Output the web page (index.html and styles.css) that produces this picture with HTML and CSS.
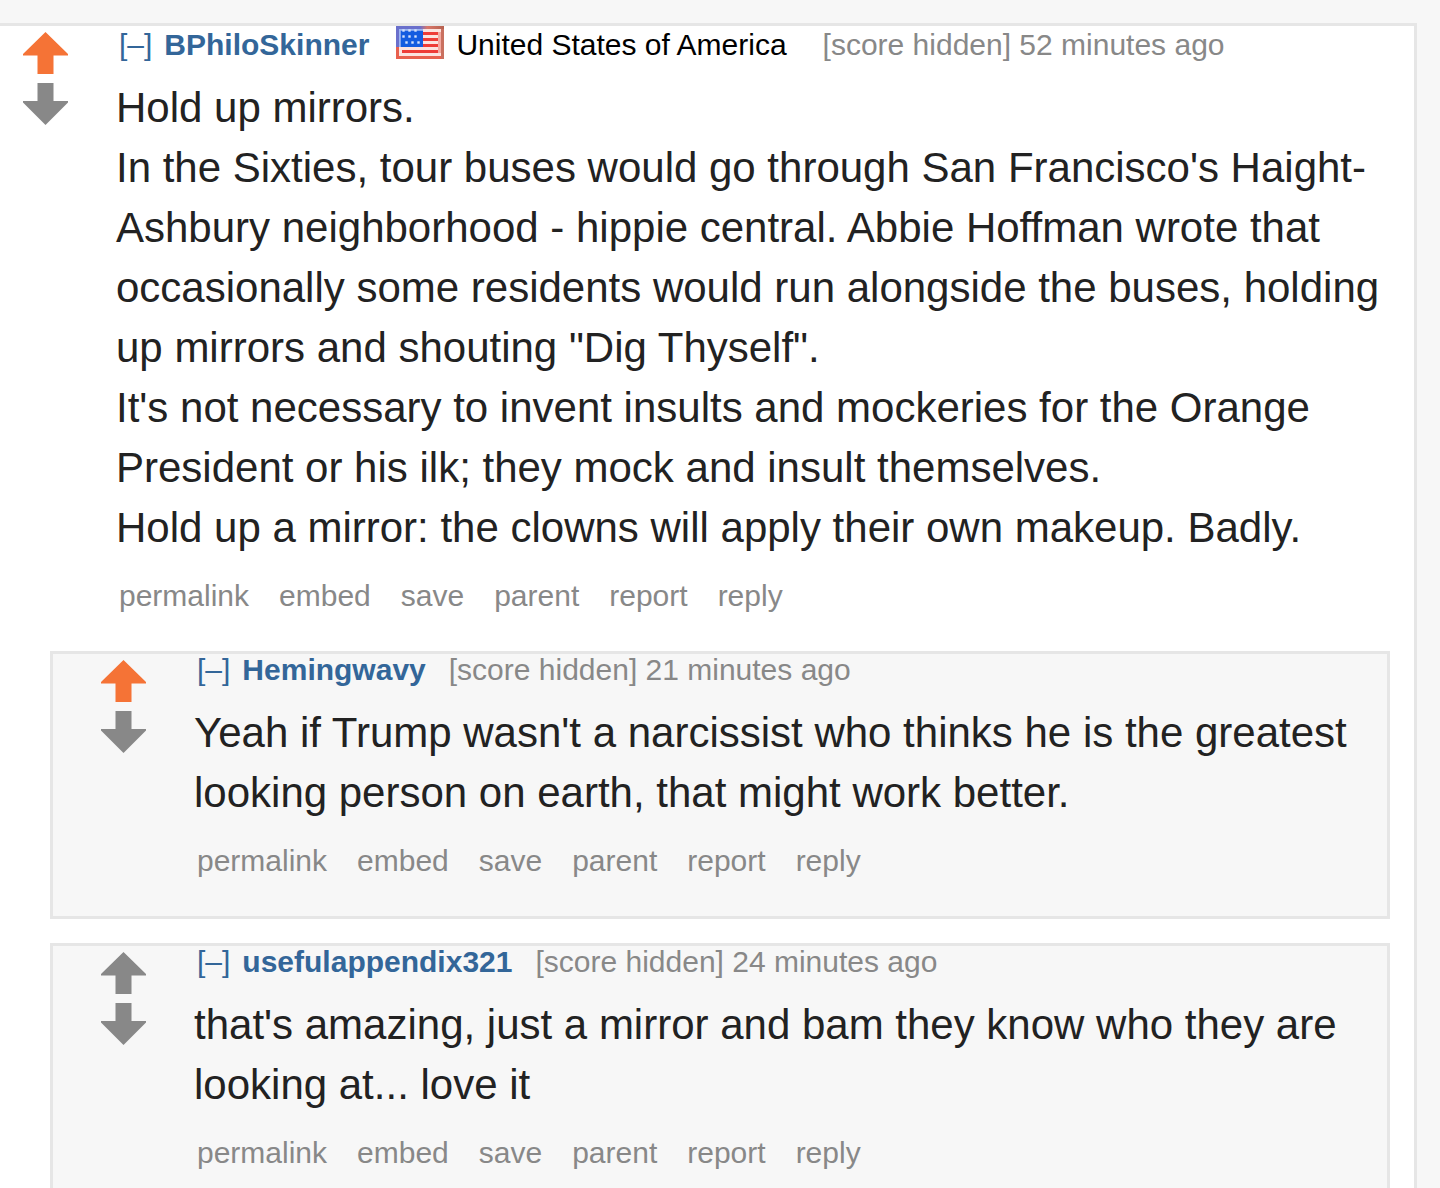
FILE: index.html
```
<!DOCTYPE html>
<html lang="en">
<head>
  <meta charset="UTF-8" />
  <meta name="viewport" content="width=device-width, initial-scale=1.0" />
  <title>Comments</title>
  <link rel="stylesheet" href="styles.css">
</head>
<body>
  <!-- shared arrow shapes -->
  <svg class="sprites" aria-hidden="true">
    <symbol id="arrow-up" viewBox="0 0 45 42">
      <path d="M22.5 0 L45 22 V23.5 H30.5 V42 H14.5 V23.5 H0 V22 Z" />
    </symbol>
    <symbol id="arrow-down" viewBox="0 0 45 42">
      <path d="M14.5 0 H30.5 V18 H45 V19.5 L22.5 42 L0 19.5 V18 H14.5 Z" />
    </symbol>
  </svg>

  <main class="thread">
    <article class="comment">
      <div class="votes">
        <button class="arrow voted" aria-label="upvote"><svg><use href="#arrow-up" /></svg></button>
        <button class="arrow" aria-label="downvote"><svg><use href="#arrow-down" /></svg></button>
      </div>
      <div class="entry">
        <div class="tagline has-flair">
          <a class="expand" href="#">[–]</a>
          <a class="author" href="#">BPhiloSkinner</a>
          <svg class="flag" viewBox="0 0 16 11" aria-hidden="true">
            <defs>
              <linearGradient id="edge">
                <stop offset="0.5" stop-color="#6a70cc" />
                <stop offset="0.65" stop-color="#d9776b" />
                <stop offset="1" stop-color="#b5614f" />
              </linearGradient>
            </defs>
            <rect width="16" height="11" fill="#e8604e" />
            <rect width="16" height="1" fill="url(#edge)" />
            <rect width="1" height="7" fill="#6a70cc" />
            <rect x="15" y="1" width="1" height="10" fill="#c9705f" />
            <rect x="1" y="1" width="14" height="9" fill="#fbe3df" />
            <!-- stripes -->
            <g fill="#ee3c37">
              <rect x="9" y="2" width="5" height="1" />
              <rect x="9" y="4" width="5" height="1" />
              <rect x="9" y="6" width="5" height="1" />
              <rect x="2" y="8" width="12" height="1" />
            </g>
            <rect x="14" y="2" width="1" height="7" fill="#f3aaa2" />
            <rect x="1" y="1" width="8" height="6" fill="#9db6f2" />
            <rect x="1.6" y="1.6" width="7.4" height="5.4" fill="#145ce0" />
            <g fill="#d5e2fb">
              <rect x="2.1" y="1.1" width="0.8" height="0.8" />
              <rect x="4.1" y="1.1" width="0.8" height="0.8" />
              <rect x="6.1" y="1.1" width="0.8" height="0.8" />
              <rect x="2.1" y="3.1" width="0.8" height="0.8" />
              <rect x="4.1" y="3.1" width="0.8" height="0.8" />
              <rect x="6.1" y="3.1" width="0.8" height="0.8" />
              <rect x="3.1" y="5.1" width="0.8" height="0.8" />
              <rect x="5.1" y="5.1" width="0.8" height="0.8" />
              <rect x="7.1" y="5.1" width="0.8" height="0.8" />
            </g>
          </svg>
          <span class="flair">United States of America</span>
          <span class="info">[score hidden] 52 minutes ago</span>
        </div>
        <div class="text">
          <p>Hold up mirrors.</p>
          <p>In the Sixties, tour buses would go through San Francisco's Haight-Ashbury neighborhood - hippie central. Abbie Hoffman wrote that occasionally some residents would run alongside the buses, holding up mirrors and shouting "Dig Thyself".</p>
          <p>It's not necessary to invent insults and mockeries for the Orange President or his ilk; they mock and insult themselves.</p>
          <p>Hold up a mirror: the clowns will apply their own makeup. Badly.</p>
        </div>
        <nav class="buttons">
          <a href="#">permalink</a>
          <a href="#">embed</a>
          <a href="#">save</a>
          <a href="#">parent</a>
          <a href="#">report</a>
          <a href="#">reply</a>
        </nav>
      </div>
    </article>

    <div class="children">
      <article class="comment child">
        <div class="votes">
          <button class="arrow voted" aria-label="upvote"><svg><use href="#arrow-up" /></svg></button>
          <button class="arrow" aria-label="downvote"><svg><use href="#arrow-down" /></svg></button>
        </div>
        <div class="entry">
          <div class="tagline">
            <a class="expand" href="#">[–]</a>
            <a class="author" href="#">Hemingwavy</a>
            <span class="info">[score hidden] 21 minutes ago</span>
          </div>
          <div class="text">
            <p>Yeah if Trump wasn't a narcissist who thinks he is the greatest looking person on earth, that might work better.</p>
          </div>
          <nav class="buttons">
            <a href="#">permalink</a>
            <a href="#">embed</a>
            <a href="#">save</a>
            <a href="#">parent</a>
            <a href="#">report</a>
            <a href="#">reply</a>
          </nav>
        </div>
      </article>

      <article class="comment child">
        <div class="votes">
          <button class="arrow" aria-label="upvote"><svg><use href="#arrow-up" /></svg></button>
          <button class="arrow" aria-label="downvote"><svg><use href="#arrow-down" /></svg></button>
        </div>
        <div class="entry">
          <div class="tagline">
            <a class="expand" href="#">[–]</a>
            <a class="author" href="#">usefulappendix321</a>
            <span class="info">[score hidden] 24 minutes ago</span>
          </div>
          <div class="text">
            <p>that's amazing, just a mirror and bam they know who they are looking at... love it</p>
          </div>
          <nav class="buttons">
            <a href="#">permalink</a>
            <a href="#">embed</a>
            <a href="#">save</a>
            <a href="#">parent</a>
            <a href="#">report</a>
            <a href="#">reply</a>
          </nav>
        </div>
      </article>
    </div>
  </main>
</body>
</html>
```
FILE: styles.css
```
:root {
  --bg: #f7f7f7;
  --border: #e6e6e6;
  --link: #369;
  --muted: #888;
  --orange: #f57336;
}

body {
  margin: 0;
  overflow: hidden;
  background: var(--bg);
  font-family: "Liberation Sans", Arial, sans-serif;
  font-size: 30px;
  line-height: 34px;
}

a {
  color: inherit;
  text-decoration: none;
}

p {
  margin: 0;
}

.sprites {
  display: none;
}

.thread {
  margin: 23px 23px 0 0;
  border: 3px solid var(--border);
  border-left: none;
  background: #fff;
}

.comment {
  display: flex;
  padding: 0 24px 38px 23px;
}

.votes {
  display: flex;
  flex-direction: column;
  flex: none;
  gap: 9px;
  width: 45px;
  margin-right: 48px;
  padding-top: 6px;
}

.arrow {
  height: 42px;
  padding: 0;
  border: none;
  background: none;
  color: var(--muted);
  cursor: pointer;
}

.arrow svg {
  display: block;
  width: 100%;
  height: 100%;
  fill: currentColor;
}

.arrow.voted {
  color: var(--orange);
}

.entry {
  flex: 1;
  min-width: 0;
}

.tagline {
  display: flex;
  margin: 0 0 18px 3px;
  line-height: 31px;
  white-space: nowrap;
}

.has-flair {
  margin-bottom: 15px;
  line-height: 37px;
}

.expand {
  margin-right: 12px;
  color: var(--link);
}

.author {
  margin-right: 23px;
  color: var(--link);
  font-weight: bold;
}

.flag {
  width: 48px;
  height: 33px;
  margin: 0 12px 0 4px;
}

.flair {
  margin-right: 36px;
  color: #000;
}

.info {
  color: var(--muted);
}

.text {
  color: #222;
  font-size: 42px;
  line-height: 60px;
}

.buttons {
  display: flex;
  gap: 30px;
  margin: 21px 0 0 3px;
  color: var(--muted);
}

.children {
  display: flex;
  flex-direction: column;
  gap: 24px;
  margin: 0 24px 24px 50px;
}

.child {
  padding-left: 48px;
  border: 3px solid var(--border);
  background: var(--bg);
}
```
